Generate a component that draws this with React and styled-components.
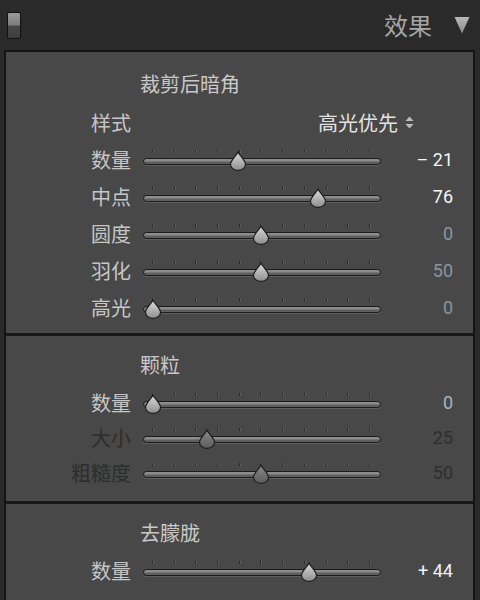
import React from 'react';
import styled, { createGlobalStyle } from 'styled-components';

const GlobalStyle = createGlobalStyle`
  html, body {
    margin: 0;
    padding: 0;
    background: #2a2a2a;
  }
  body {
    width: 480px;
    height: 600px;
    overflow: hidden;
    font-family: "Noto Sans CJK SC", "Noto Sans", sans-serif;
  }
`;

const Frame = styled.div`
  width: 480px;
  height: 600px;
  background: #2a2a2a;
  display: flex;
  flex-direction: column;
  overflow: hidden;
`;

const Header = styled.div`
  flex-shrink: 0;
  height: 50px;
  display: flex;
  align-items: center;
  padding: 0 10px 0 7px;
`;

const Toggle = styled.div`
  width: 12px;
  height: 25px;
  border: 1px solid #121212;
  border-radius: 2px;
  background: linear-gradient(#9a9a9a 0%, #7c7c7c 48%, #484848 52%, #3e3e3e 100%);
`;

const HeaderTitle = styled.div`
  margin-left: auto;
  margin-right: 22px;
  font-size: 24px;
  line-height: 28px;
  color: #a6a6a6;
`;

const Panel = styled.div`
  flex: 1;
  min-height: 0;
  overflow: hidden;
  margin-left: 4px;
  width: 467px;
  border: 2px solid #151515;
  border-bottom: none;
  background: #484848;
`;

const Section = styled.div`
  padding: ${p => p.$pt}px 0 ${p => p.$pb}px;
  & + & {
    border-top: 3px solid #171717;
  }
`;

const Title = styled.div`
  height: 28px;
  line-height: 28px;
  padding-left: 134px;
  margin-bottom: 6px;
  font-size: 20px;
  color: #c9c9c9;
`;

const Row = styled.div`
  display: grid;
  grid-template-columns: 125px 238px 72px;
  column-gap: 12px;
  align-items: center;
  height: ${p => p.$h}px;
`;

const Label = styled.div`
  text-align: right;
  font-size: 20px;
  line-height: 24px;
  color: ${p => (p.$dim ? '#2d2d2d' : '#c6c6c6')};
  white-space: nowrap;
`;

const Value = styled.div`
  justify-self: end;
  margin-right: 12px;
  font-family: "Roboto", "Liberation Sans", sans-serif;
  font-size: 18px;
  line-height: 22px;
  color: ${p => ({ on: '#f2f4f8', soft: '#a9b5c2', off: '#8a95a1', dim: '#2f2f2f' }[p.$tone])};
`;

const Select = styled.div`
  grid-column: 2 / 4;
  justify-self: end;
  margin-right: 51px;
  display: flex;
  align-items: center;
  gap: 7px;
  font-size: 20px;
  line-height: 24px;
  color: #e2e2e2;
`;

const SliderBox = styled.div`
  position: relative;
  height: 36px;
`;

const Track = styled.div`
  position: absolute;
  left: 0;
  right: 0;
  top: 16px;
  height: 7px;
  box-sizing: border-box;
  border: 1px solid #1b1b1b;
  border-radius: 4px;
  background: linear-gradient(#8c8c8c 0%, #8c8c8c 45%, #5e5e5e 55%, #5e5e5e 100%);
  box-shadow: 0 1px 0 rgba(110, 110, 110, 0.6);
`;

const Ticks = styled.div`
  position: absolute;
  left: 9px;
  right: 11px;
  top: 8px;
  display: flex;
  justify-content: space-between;
`;

const Tick = styled.span`
  width: 1px;
  height: ${p => (p.$big ? 5 : 3)}px;
  margin-top: ${p => (p.$big ? -2 : 0)}px;
  background: #262626;
  box-shadow: 1px 0 0 rgba(120, 120, 120, 0.5);
`;

const Thumb = styled.svg`
  position: absolute;
  top: 9px;
  width: 18px;
  height: 20px;
  margin-left: -9px;
`;

const Arrows = () => (
  <svg width="9" height="13" viewBox="0 0 9 13">
    <path d="M4.5 0.5 L8.5 5 L0.5 5 Z" fill="#bdbdbd" />
    <path d="M4.5 12.5 L8.5 8 L0.5 8 Z" fill="#bdbdbd" />
  </svg>
);

const Triangle = () => (
  <svg width="16" height="18" viewBox="0 0 16 18">
    <defs>
      <linearGradient id="tri" x1="0" y1="0" x2="0" y2="1">
        <stop offset="0" stopColor="#b8b8b8" />
        <stop offset="1" stopColor="#8a8a8a" />
      </linearGradient>
    </defs>
    <path d="M0.5 1 L15.5 1 L8 17.5 Z" fill="url(#tri)" />
  </svg>
);

const Slider = ({ pos, dim, center }) => (
  <SliderBox>
    <Ticks>
      {Array.from({ length: 11 }, (_, i) => (
        <Tick key={i} $big={center && i === 5} />
      ))}
    </Ticks>
    <Track />
    <Thumb viewBox="0 0 18 20" style={{ left: 9.7 + pos * 217 }}>
      <defs>
        <linearGradient id={dim ? 'thd' : 'th'} x1="0" y1="0" x2="0" y2="1">
          <stop offset="0" stopColor={dim ? '#8a8a8a' : '#dcdcdc'} />
          <stop offset="1" stopColor={dim ? '#5c5c5c' : '#8e8e8e'} />
        </linearGradient>
      </defs>
      <path
        d="M9 1 C10.5 5 16.5 9 16.5 13.5 A7.5 5.8 0 0 1 1.5 13.5 C1.5 9 7.5 5 9 1 Z"
        fill={`url(#${dim ? 'thd' : 'th'})`}
        stroke="#1c1c1c"
        strokeWidth="1.2"
      />
    </Thumb>
  </SliderBox>
);

const SliderRow = ({ label, pos, value, tone, dimLabel, dimThumb, center, h }) => (
  <Row $h={h}>
    <Label $dim={dimLabel}>{label}</Label>
    <Slider pos={pos} dim={dimThumb} center={center} />
    <Value $tone={tone}>{value}</Value>
  </Row>
);

export default function App() {
  return (
    <>
      <GlobalStyle />
      <Frame>
        <Header>
          <Toggle />
          <HeaderTitle>效果</HeaderTitle>
          <Triangle />
        </Header>
        <Panel>
          <Section $pt={18} $pb={7}>
            <Title>裁剪后暗角</Title>
            <Row $h={37}>
              <Label>样式</Label>
              <Select>
                高光优先
                <Arrows />
              </Select>
            </Row>
            <SliderRow h={37} label="数量" pos={0.395} value="– 21" tone="on" />
            <SliderRow h={37} label="中点" pos={0.76} value="76" tone="on" />
            <SliderRow h={37} label="圆度" pos={0.5} value="0" tone="off" />
            <SliderRow h={37} label="羽化" pos={0.5} value="50" tone="off" />
            <SliderRow h={37} label="高光" pos={0} value="0" tone="off" />
          </Section>
          <Section $pt={15} $pb={11}>
            <Title>颗粒</Title>
            <SliderRow h={35} label="数量" pos={0} value="0" tone="soft" />
            <SliderRow h={35} label="大小" pos={0.25} value="25" tone="dim" dimLabel dimThumb />
            <SliderRow h={35} label="粗糙度" pos={0.5} value="50" tone="dim" dimLabel dimThumb />
          </Section>
          <Section $pt={15} $pb={10}>
            <Title>去朦胧</Title>
            <SliderRow h={35} label="数量" pos={0.72} value="+ 44" tone="on" center />
          </Section>
        </Panel>
      </Frame>
    </>
  );
}
